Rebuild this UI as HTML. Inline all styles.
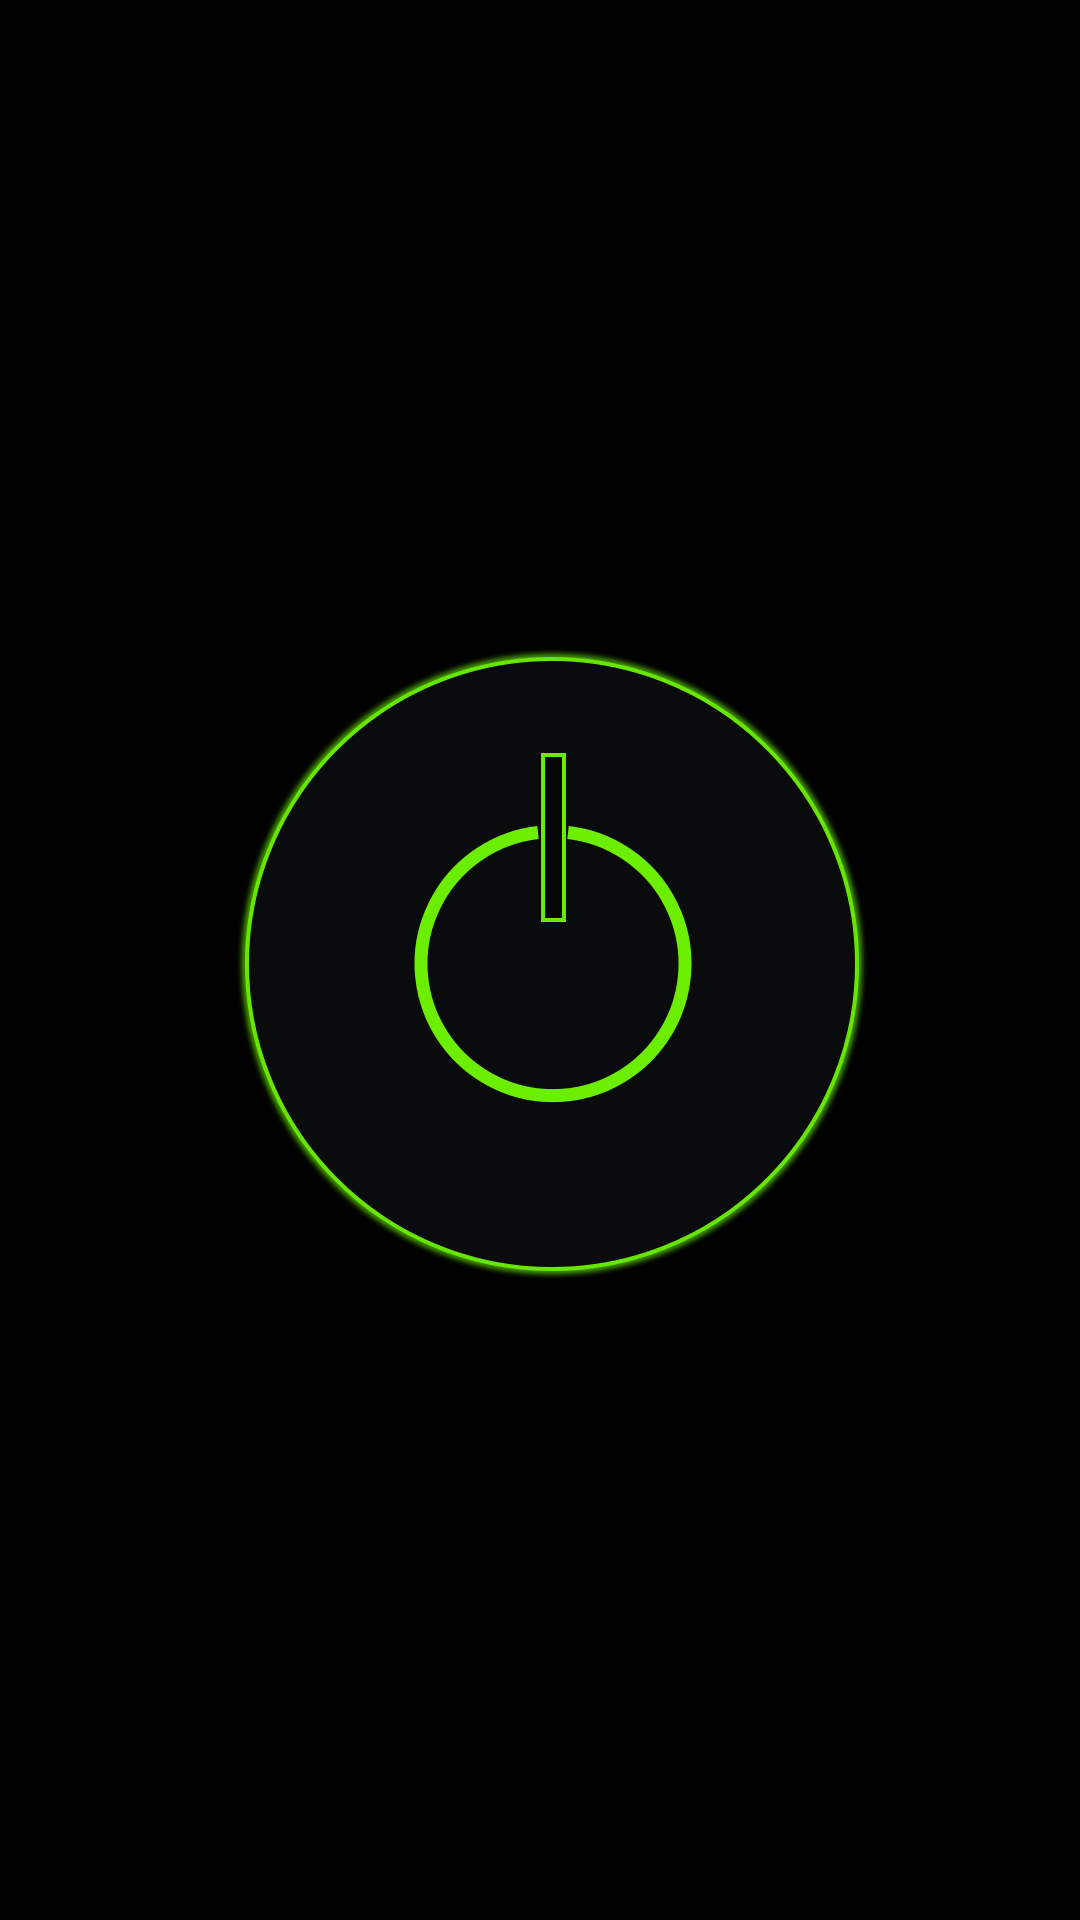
<!DOCTYPE html>
<html><head><style>html,body{margin:0;padding:0;background:#000;width:1080px;height:1920px;overflow:hidden}</style></head>
<body>
<svg width="1080" height="1920" viewBox="0 0 1080 1920" xmlns="http://www.w3.org/2000/svg">
<defs>
<filter id="g" x="-20%" y="-20%" width="140%" height="140%"><feGaussianBlur stdDeviation="3"/></filter>
</defs>
<rect width="1080" height="1920" fill="#010101"/>
<circle cx="552" cy="964" r="306" fill="none" stroke="#5fd400" stroke-width="8" filter="url(#g)" opacity="0.8"/>
<circle cx="552" cy="964" r="305" fill="#0a0b0c" stroke="#66e600" stroke-width="4"/>
<path d="M538 832.5 A132 132 0 1 0 568 832.5" fill="none" stroke="#6bee00" stroke-width="13"/>
<rect x="543" y="755" width="21" height="165" fill="#050505" stroke="#66ee00" stroke-width="4"/>
</svg>
</body></html>
